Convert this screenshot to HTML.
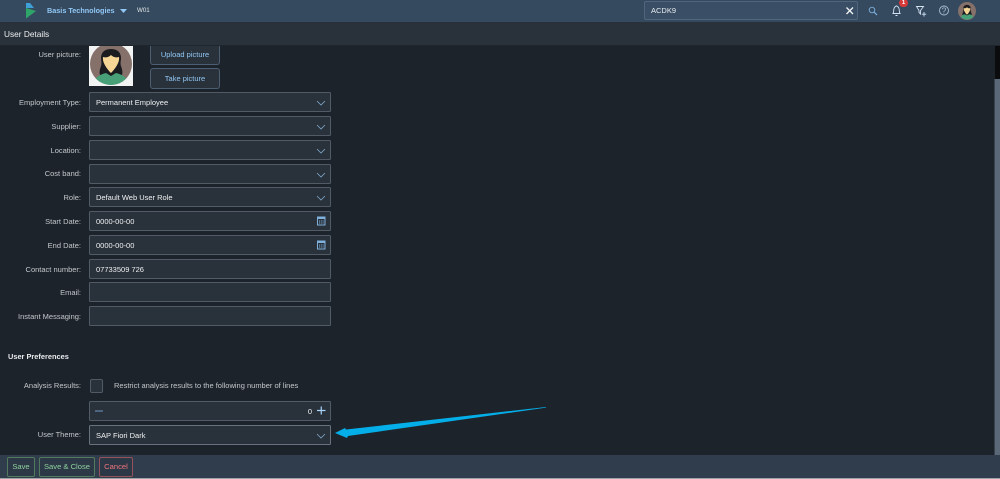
<!DOCTYPE html>
<html><head><meta charset="utf-8"><style>
html,body{margin:0;padding:0;width:1000px;height:479px;overflow:hidden;background:#1d232b}
body{font-family:"Liberation Sans",sans-serif;font-size:7.5px;position:relative;color:#d5dadd;filter:blur(.3px)}
.a{position:absolute}
.lbl{position:absolute;right:919px;width:90px;text-align:right;color:#c3c8cc;font-size:7.5px;line-height:13px;white-space:nowrap}
.f{position:absolute;left:89px;width:240px;height:18px;background:#29313a;border:1px solid #525b65;border-radius:1.5px;color:#f0f2f3;line-height:19px;text-indent:6px;font-size:7.5px;white-space:nowrap}
.f svg{position:absolute}
.btn{position:absolute;box-sizing:border-box;background:#29313a;border:1px solid #4c5e72;border-radius:3px;color:#91c8f6;text-align:center;font-size:7.5px}
.fb{position:absolute;top:457px;height:20px;box-sizing:border-box;border:1px solid #527a5d;border-radius:2px;color:#8fd09d;text-align:center;line-height:17px;font-size:7.6px;background:#2c3846}
</style></head><body>
<div class="a" style="left:0;top:0;width:1000px;height:22px;background:#354a5f"></div>
<div class="a" style="left:0;top:22px;width:1000px;height:24px;background:#29313a;border-bottom:1px solid #20262d;box-sizing:border-box"></div>
<svg class="a" style="left:25px;top:3px" width="13" height="16"><polygon points="1,0 5,0 9,5 1,5" fill="#3fa0d8"/><polygon points="1,5 11,8 1,15.5" fill="#2fa56a"/></svg>
<div class="a" style="left:47px;top:4px;color:#91c8f6;font-size:7.25px;line-height:13px;font-weight:bold;white-space:nowrap">Basis Technologies</div>
<svg class="a" style="left:120px;top:8px" width="8" height="6"><polygon points="0,1 7,1 3.5,5" fill="#91c8f6"/></svg>
<div class="a" style="left:137px;top:5px;color:#e5e8ea;font-size:6.2px;line-height:11px">W01</div>
<div class="a" style="left:644px;top:1px;width:214px;height:19px;box-sizing:border-box;background:#3a4f66;border:1px solid #51667d;border-radius:2px;color:#e8ecef;line-height:17px;text-indent:6px;font-size:7.5px">ACDK9</div>
<svg class="a" style="left:845px;top:6px" width="10" height="10"><path d="M1.500 1.500L8 8M8 1.500L1.500 8" stroke="#f2f4f6" stroke-width="1.300"/></svg>
<svg class="a" style="left:867px;top:5px" width="12" height="12"><circle cx="5" cy="5" r="2.800" fill="none" stroke="#7fb3e0" stroke-width=".9"/><path d="M7 7L10 10" stroke="#7fb3e0" stroke-width="1.200"/></svg>
<svg class="a" style="left:890px;top:4px" width="14" height="13"><path d="M3 9.500C4 8 3.500 6 4 4.500C4.500 2.800 6 2 6.500 2C7 2 8.500 2.800 9 4.500C9.500 6 9 8 10 9.500ZM5.500 11.500H7.500" fill="none" stroke="#d3e3f2" stroke-width=".9"/></svg>
<div class="a" style="left:899px;top:-1px;width:9px;height:8px;background:#d5393a;border-radius:4px;color:#fff;font-size:6px;line-height:8px;text-align:center;font-weight:bold">1</div>
<svg class="a" style="left:915px;top:4px" width="14" height="13"><path d="M1.500 2.500H8.500L5.500 6.500V10L4 8.500V6.500Z" fill="none" stroke="#d3e3f2" stroke-width=".9"/><path d="M9 8V12.500M6.800 10.200H11.200" stroke="#d3e3f2" stroke-width=".9"/></svg>
<svg class="a" style="left:938px;top:4px" width="13" height="13"><circle cx="6" cy="6.500" r="4.500" fill="none" stroke="#a9bdd1" stroke-width=".9"/><text x="6" y="9.500" font-size="8.500" text-anchor="middle" fill="#a9bdd1" font-family="Liberation Sans">?</text></svg>
<svg class="a" style="left:958px;top:2px" width="18" height="18" viewBox="0 0 44 44"><defs><clipPath id="c1"><circle cx="22" cy="22" r="21"/></clipPath></defs><circle cx="22" cy="22" r="22" fill="#85706a"/><g clip-path="url(#c1)"><path d="M22 7c-5 0-9 3-9 8 0 3 1 6-1 10-1 3-2 5-1 8l5 1h12l5-1c1-3 0-5-1-8-2-4-1-7-1-10 0-5-4-8-9-8z" fill="#1b1c20"/><path d="M14 15c4 1 6-1 8-2 2 1 4 3 8 2 1 5-5 14-8 16-3-2-9-11-8-16z" fill="#f6d695"/><path d="M4 46c0-8 4-14 12-16l6 3 6-3c8 2 12 8 12 16z" fill="#48a078"/></g></svg>
<div class="a" style="left:995px;top:46px;width:5px;height:33px;background:#0b0c0e"></div>
<div class="a" style="left:995px;top:79px;width:5px;height:376px;background:#5a6878"></div>
<div class="a" style="left:994px;top:79px;width:1px;height:376px;background:#39434e"></div>
<div class="a" style="left:4px;top:28px;color:#eef1f3;font-size:8.3px;line-height:13px">User Details</div>

<div class="lbl" style="top:48px">User picture:</div>
<div class="a" style="left:89px;top:46px;width:44px;height:40px;background:#f2f3f3;overflow:hidden"></div>
<svg class="a" style="left:89px;top:46px" width="44" height="40" viewBox="0 0 44 40"><defs><clipPath id="c2"><circle cx="22" cy="18" r="21"/></clipPath></defs><circle cx="22" cy="18" r="21" fill="#85706a"/><g clip-path="url(#c2)"><path d="M22 3c-6 0-10 3-10 9 0 3 1 5 0 8-1 3-2 6-1 9l6 2h10l6-2c1-3 0-6-1-9-1-3 0-5 0-8 0-6-4-9-10-9z" fill="#1b1c20"/><path d="M14 11c3 1 6 0 8-2 2 2 5 3 8 2 1 6-5 13-8 16-3-3-9-10-8-16z" fill="#f6d695"/><path d="M4 42c0-8 4-13 13-15l5 3 5-3c9 2 13 7 13 15z" fill="#48a078"/></g></svg>
<div class="btn" style="left:150px;top:46px;width:70px;height:19px;border-top:none;line-height:17px;border-radius:0 0 3px 3px">Upload picture</div>
<div class="btn" style="left:150px;top:68px;width:70px;height:21px;line-height:19px">Take picture</div>

<div class="lbl" style="top:96px">Employment Type:</div>
<div class="f" style="top:92px">Permanent Employee<svg style="left:226px;top:7px" width="10" height="6"><path d="M1 1L5 5L9 1" fill="none" stroke="#7fa8cc" stroke-width=".8"/></svg></div>
<div class="lbl" style="top:120px">Supplier:</div>
<div class="f" style="top:116px"><svg style="left:226px;top:7px" width="10" height="6"><path d="M1 1L5 5L9 1" fill="none" stroke="#7fa8cc" stroke-width=".8"/></svg></div>
<div class="lbl" style="top:144px">Location:</div>
<div class="f" style="top:140px"><svg style="left:226px;top:7px" width="10" height="6"><path d="M1 1L5 5L9 1" fill="none" stroke="#7fa8cc" stroke-width=".8"/></svg></div>
<div class="lbl" style="top:167px">Cost band:</div>
<div class="f" style="top:164px"><svg style="left:226px;top:7px" width="10" height="6"><path d="M1 1L5 5L9 1" fill="none" stroke="#7fa8cc" stroke-width=".8"/></svg></div>
<div class="lbl" style="top:191px">Role:</div>
<div class="f" style="top:187px">Default Web User Role<svg style="left:226px;top:7px" width="10" height="6"><path d="M1 1L5 5L9 1" fill="none" stroke="#7fa8cc" stroke-width=".8"/></svg></div>
<div class="lbl" style="top:215px">Start Date:</div>
<div class="f" style="top:211px">0000-00-00<svg style="left:227px;top:4px" width="9" height="10"><rect x=".5" y="1" width="7.500" height="8" fill="none" stroke="#7fb0da"/><rect x=".5" y="1" width="7.500" height="2" fill="#7fb0da"/><path d="M2 5H7M2 7H7" stroke="#7fb0da" stroke-dasharray="1 .8"/></svg></div>
<div class="lbl" style="top:239px">End Date:</div>
<div class="f" style="top:235px">0000-00-00<svg style="left:227px;top:4px" width="9" height="10"><rect x=".5" y="1" width="7.500" height="8" fill="none" stroke="#7fb0da"/><rect x=".5" y="1" width="7.500" height="2" fill="#7fb0da"/><path d="M2 5H7M2 7H7" stroke="#7fb0da" stroke-dasharray="1 .8"/></svg></div>
<div class="lbl" style="top:263px">Contact number:</div>
<div class="f" style="top:259px">07733509 726</div>
<div class="lbl" style="top:286px">Email:</div>
<div class="f" style="top:282px"></div>
<div class="lbl" style="top:310px">Instant Messaging:</div>
<div class="f" style="top:306px"></div>

<div class="a" style="left:8px;top:351px;font-weight:bold;color:#e8ebee;font-size:7.4px;line-height:12px">User Preferences</div>
<div class="lbl" style="top:379px">Analysis Results:</div>
<div class="a" style="left:90px;top:379px;width:11px;height:12px;background:#29313a;border:1px solid #525b65;border-radius:2px"></div>
<div class="a" style="left:114px;top:379px;color:#c3c8cc;font-size:7.5px;line-height:13px;white-space:nowrap">Restrict analysis results to the following number of lines</div>
<div class="f" style="top:401px"><svg style="left:5px;top:8px" width="9" height="2"><path d="M0 1H8" stroke="#6f9cc6" stroke-width="1"/></svg><span class="a" style="right:18px;top:0;text-indent:0">0</span><svg style="left:227px;top:4px" width="9" height="9"><path d="M0 4.500H8.500M4.250 .5V8.500" stroke="#a8d4fa" stroke-width="1.200"/></svg></div>
<div class="lbl" style="top:428px">User Theme:</div>
<div class="f" style="top:425px;border-width:1px 1px 1.500px;border-color:#69727c">SAP Fiori Dark<svg style="left:226px;top:7px" width="10" height="6"><path d="M1 1L5 5L9 1" fill="none" stroke="#7fa8cc" stroke-width=".8"/></svg></div>

<svg class="a" style="left:330px;top:400px" width="220" height="45"><polygon points="5,33 15,28 16,29.500 216,7 216,7.600 18,36 17,38" fill="#04aee8"/></svg>

<div class="a" style="left:0;top:455px;width:1000px;height:23px;background:#2f3d4d"></div>
<div class="a" style="left:0;top:478px;width:1000px;height:1px;background:#9ea3a8"></div>
<div class="fb" style="left:7px;width:28px">Save</div>
<div class="fb" style="left:39px;width:56px">Save &amp; Close</div>
<div class="fb" style="left:99px;width:34px;border-color:#96525a;color:#f0747e">Cancel</div>
</body></html>
